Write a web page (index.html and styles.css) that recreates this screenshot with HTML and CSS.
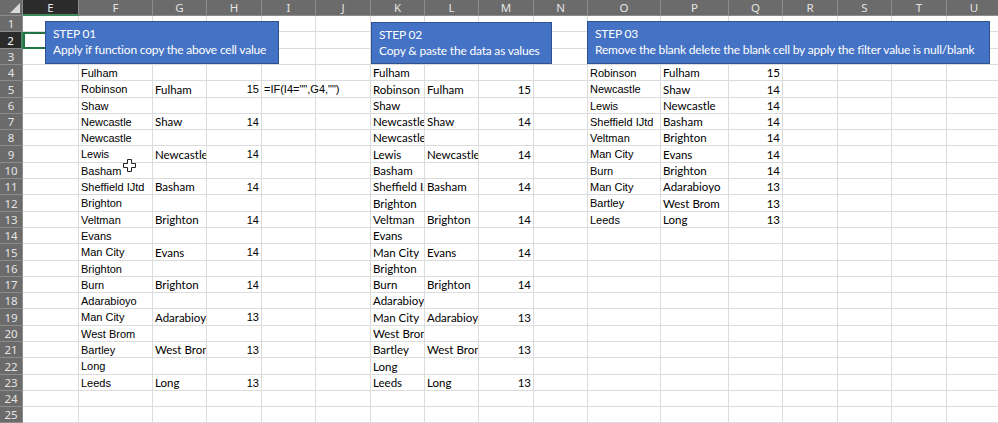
FILE: index.html
```html
<!DOCTYPE html>
<html>
<head>
<meta charset="utf-8">
<link rel="stylesheet" href="styles.css">
</head>
<body>
<div class="sheet">
  <div class="grid">
    <div class="row">
      <b class="corner"></b><b class="ch sel">E</b><b class="ch">F</b><b class="ch">G</b><b class="ch">H</b><b class="ch">I</b><b class="ch">J</b><b class="ch">K</b><b class="ch">L</b><b class="ch">M</b><b class="ch">N</b><b class="ch">O</b><b class="ch">P</b><b class="ch">Q</b><b class="ch">R</b><b class="ch">S</b><b class="ch">T</b><b class="ch">U</b>
    </div>
    <div class="row"><b class="rh">1</b><i></i><i></i><i></i><i></i><i></i><i></i><i></i><i></i><i></i><i></i><i></i><i></i><i></i><i></i><i></i><i></i><i></i></div>
    <div class="row"><b class="rh sel">2</b><i class="active"></i><i></i><i></i><i></i><i></i><i></i><i></i><i></i><i></i><i></i><i></i><i></i><i></i><i></i><i></i><i></i><i></i></div>
    <div class="row"><b class="rh">3</b><i></i><i></i><i></i><i></i><i></i><i></i><i></i><i></i><i></i><i></i><i></i><i></i><i></i><i></i><i></i><i></i><i></i></div>
    <div class="row"><b class="rh">4</b><i></i><i class="a">Fulham</i><i></i><i></i><i></i><i></i><i class="c">Fulham</i><i></i><i></i><i></i><i class="a">Robinson</i><i class="c">Fulham</i><i class="c n">15</i><i></i><i></i><i></i><i></i></div>
    <div class="row"><b class="rh">5</b><i></i><i class="a">Robinson</i><i class="c">Fulham</i><i class="a n">15</i><i class="a spill">=IF(I4="",G4,"")</i><i></i><i class="c">Robinson</i><i class="c">Fulham</i><i class="c n">15</i><i></i><i class="a">Newcastle</i><i class="c">Shaw</i><i class="c n">14</i><i></i><i></i><i></i><i></i></div>
    <div class="row"><b class="rh">6</b><i></i><i class="a">Shaw</i><i></i><i></i><i></i><i></i><i class="c">Shaw</i><i></i><i></i><i></i><i class="a">Lewis</i><i class="c">Newcastle</i><i class="c n">14</i><i></i><i></i><i></i><i></i></div>
    <div class="row"><b class="rh">7</b><i></i><i class="a">Newcastle</i><i class="c">Shaw</i><i class="a n">14</i><i></i><i></i><i class="c">Newcastle</i><i class="c">Shaw</i><i class="c n">14</i><i></i><i class="a">Sheffield IJtd</i><i class="c">Basham</i><i class="c n">14</i><i></i><i></i><i></i><i></i></div>
    <div class="row"><b class="rh">8</b><i></i><i class="a">Newcastle</i><i></i><i></i><i></i><i></i><i class="c">Newcastle</i><i></i><i></i><i></i><i class="a">Veltman</i><i class="c">Brighton</i><i class="c n">14</i><i></i><i></i><i></i><i></i></div>
    <div class="row"><b class="rh">9</b><i></i><i class="a">Lewis</i><i class="c">Newcastle</i><i class="a n">14</i><i></i><i></i><i class="c">Lewis</i><i class="c">Newcastle</i><i class="c n">14</i><i></i><i class="a">Man City</i><i class="c">Evans</i><i class="c n">14</i><i></i><i></i><i></i><i></i></div>
    <div class="row"><b class="rh">10</b><i></i><i class="a">Basham</i><i></i><i></i><i></i><i></i><i class="c">Basham</i><i></i><i></i><i></i><i class="a">Burn</i><i class="c">Brighton</i><i class="c n">14</i><i></i><i></i><i></i><i></i></div>
    <div class="row"><b class="rh">11</b><i></i><i class="a">Sheffield IJtd</i><i class="c">Basham</i><i class="a n">14</i><i></i><i></i><i class="c">Sheffield IJtd</i><i class="c">Basham</i><i class="c n">14</i><i></i><i class="a">Man City</i><i class="c">Adarabioyo</i><i class="c n">13</i><i></i><i></i><i></i><i></i></div>
    <div class="row"><b class="rh">12</b><i></i><i class="a">Brighton</i><i></i><i></i><i></i><i></i><i class="c">Brighton</i><i></i><i></i><i></i><i class="a">Bartley</i><i class="c">West Brom</i><i class="c n">13</i><i></i><i></i><i></i><i></i></div>
    <div class="row"><b class="rh">13</b><i></i><i class="a">Veltman</i><i class="c">Brighton</i><i class="a n">14</i><i></i><i></i><i class="c">Veltman</i><i class="c">Brighton</i><i class="c n">14</i><i></i><i class="a">Leeds</i><i class="c">Long</i><i class="c n">13</i><i></i><i></i><i></i><i></i></div>
    <div class="row"><b class="rh">14</b><i></i><i class="a">Evans</i><i></i><i></i><i></i><i></i><i class="c">Evans</i><i></i><i></i><i></i><i></i><i></i><i></i><i></i><i></i><i></i><i></i></div>
    <div class="row"><b class="rh">15</b><i></i><i class="a">Man City</i><i class="c">Evans</i><i class="a n">14</i><i></i><i></i><i class="c">Man City</i><i class="c">Evans</i><i class="c n">14</i><i></i><i></i><i></i><i></i><i></i><i></i><i></i><i></i></div>
    <div class="row"><b class="rh">16</b><i></i><i class="a">Brighton</i><i></i><i></i><i></i><i></i><i class="c">Brighton</i><i></i><i></i><i></i><i></i><i></i><i></i><i></i><i></i><i></i><i></i></div>
    <div class="row"><b class="rh">17</b><i></i><i class="a">Burn</i><i class="c">Brighton</i><i class="a n">14</i><i></i><i></i><i class="c">Burn</i><i class="c">Brighton</i><i class="c n">14</i><i></i><i></i><i></i><i></i><i></i><i></i><i></i><i></i></div>
    <div class="row"><b class="rh">18</b><i></i><i class="a">Adarabioyo</i><i></i><i></i><i></i><i></i><i class="c">Adarabioyo</i><i></i><i></i><i></i><i></i><i></i><i></i><i></i><i></i><i></i><i></i></div>
    <div class="row"><b class="rh">19</b><i></i><i class="a">Man City</i><i class="c">Adarabioyo</i><i class="a n">13</i><i></i><i></i><i class="c">Man City</i><i class="c">Adarabioyo</i><i class="c n">13</i><i></i><i></i><i></i><i></i><i></i><i></i><i></i><i></i></div>
    <div class="row"><b class="rh">20</b><i></i><i class="a">West Brom</i><i></i><i></i><i></i><i></i><i class="c">West Brom</i><i></i><i></i><i></i><i></i><i></i><i></i><i></i><i></i><i></i><i></i></div>
    <div class="row"><b class="rh">21</b><i></i><i class="a">Bartley</i><i class="c">West Brom</i><i class="a n">13</i><i></i><i></i><i class="c">Bartley</i><i class="c">West Brom</i><i class="c n">13</i><i></i><i></i><i></i><i></i><i></i><i></i><i></i><i></i></div>
    <div class="row"><b class="rh">22</b><i></i><i class="a">Long</i><i></i><i></i><i></i><i></i><i class="c">Long</i><i></i><i></i><i></i><i></i><i></i><i></i><i></i><i></i><i></i><i></i></div>
    <div class="row"><b class="rh">23</b><i></i><i class="a">Leeds</i><i class="c">Long</i><i class="a n">13</i><i></i><i></i><i class="c">Leeds</i><i class="c">Long</i><i class="c n">13</i><i></i><i></i><i></i><i></i><i></i><i></i><i></i><i></i></div>
    <div class="row"><b class="rh">24</b><i></i><i></i><i></i><i></i><i></i><i></i><i></i><i></i><i></i><i></i><i></i><i></i><i></i><i></i><i></i><i></i><i></i></div>
    <div class="row"><b class="rh">25</b><i></i><i></i><i></i><i></i><i></i><i></i><i></i><i></i><i></i><i></i><i></i><i></i><i></i><i></i><i></i><i></i><i></i></div>
  </div>

  <div class="note note1"><div>STEP 01</div><div>Apply if function copy the above cell value</div></div>
  <div class="note note2"><div>STEP 02</div><div>Copy &amp; paste the data as values</div></div>
  <div class="note note3"><div>STEP 03</div><div>Remove the blank delete the blank cell by apply the filter value is null/blank</div></div>

  <svg class="cursor" width="13" height="13" viewBox="0 0 13 13">
    <path d="M4.5 0.5h4v4h4v4h-4v4h-4v-4h-4v-4h4z" fill="#fff" stroke="#222" stroke-width="1"/>
  </svg>
</div>
</body>
</html>
```

FILE: styles.css
```css
html, body {
  margin: 0;
  padding: 0;
  background: #ffffff;
  overflow: hidden;
}

.sheet {
  position: relative;
  width: 998px;
  height: 423px;
  overflow: hidden;
}

.grid {
  display: grid;
  grid-template-columns: 23px 56px 74px 54px 55px 54px 55px 54px 54px 55px 54px 73px 68px 54px 55px 54px 55px 55px;
  grid-template-rows: 16px 16px 17px 16px 16px 17px 16px 16px 16px 17px 16px 16px 17px 16px 16px 17px 16px 16px 16px 17px 16px 16px 17px 16px 16px 16px;
  width: 1002px;
}

.row {
  display: contents;
}

.grid b,
.grid i {
  font-style: normal;
  font-weight: normal;
  box-sizing: border-box;
  display: flex;
  align-items: center;
  white-space: nowrap;
  overflow: hidden;
  min-width: 0;
}

.corner {
  background: #6b6b6b;
  border-right: 1px solid #8c8c8c;
  border-bottom: 1px solid #8c8c8c;
  position: relative;
}

.corner::after {
  content: "";
  position: absolute;
  right: 2px;
  bottom: 2px;
  width: 0;
  height: 0;
  border-left: 10px solid transparent;
  border-bottom: 10px solid #d8d8d8;
}

.ch {
  background: #6b6b6b;
  color: #e4e4e4;
  font-family: "Noto Sans", "Open Sans", sans-serif;
  font-size: 11.5px;
  justify-content: center;
  border-right: 1px solid #8c8c8c;
  border-bottom: 1px solid #8c8c8c;
}

.ch.sel {
  background: #2b2b2b;
  color: #e8e8e8;
  border-bottom: 2px solid #3f8a5a;
}

.rh {
  background: #6b6b6b;
  color: #e4e4e4;
  font-family: "Noto Sans", "Open Sans", sans-serif;
  font-size: 11.5px;
  justify-content: center;
  border-right: 1px solid #8c8c8c;
  border-bottom: 1px solid #8c8c8c;
}

.rh.sel {
  background: #2b2b2b;
  color: #ffffff;
  border-right: 2px solid #3f8a5a;
}

.grid i {
  border-right: 1px solid #dcdcdc;
  border-bottom: 1px solid #dcdcdc;
  padding: 0 2px 0 2px;
  color: #000000;
  background: transparent;
}

.grid i.active {
  border: 2px solid #217346;
}

.a {
  font-family: "Liberation Sans", Arial, sans-serif;
  font-size: 11px;
}

.c {
  font-family: Lato, "Open Sans", sans-serif;
  font-size: 11.5px;
}

.n {
  justify-content: flex-end;
}

.grid i.spill {
  overflow: visible;
}

.note {
  position: absolute;
  box-sizing: border-box;
  background: #4472c4;
  border: 1px solid #2f528f;
  color: #ffffff;
  font-family: Lato, "Open Sans", sans-serif;
  font-size: 12px;
  letter-spacing: -0.2px;
  line-height: 16px;
  padding: 4px 0 0 7px;
  white-space: nowrap;
}

.note1 {
  left: 45px;
  top: 21px;
  width: 234px;
  height: 43px;
}

.note2 {
  left: 371px;
  top: 22px;
  width: 181px;
  height: 42px;
}

.note3 {
  left: 587px;
  top: 21px;
  width: 403px;
  height: 43px;
}

.cursor {
  position: absolute;
  left: 123px;
  top: 159px;
}
```
